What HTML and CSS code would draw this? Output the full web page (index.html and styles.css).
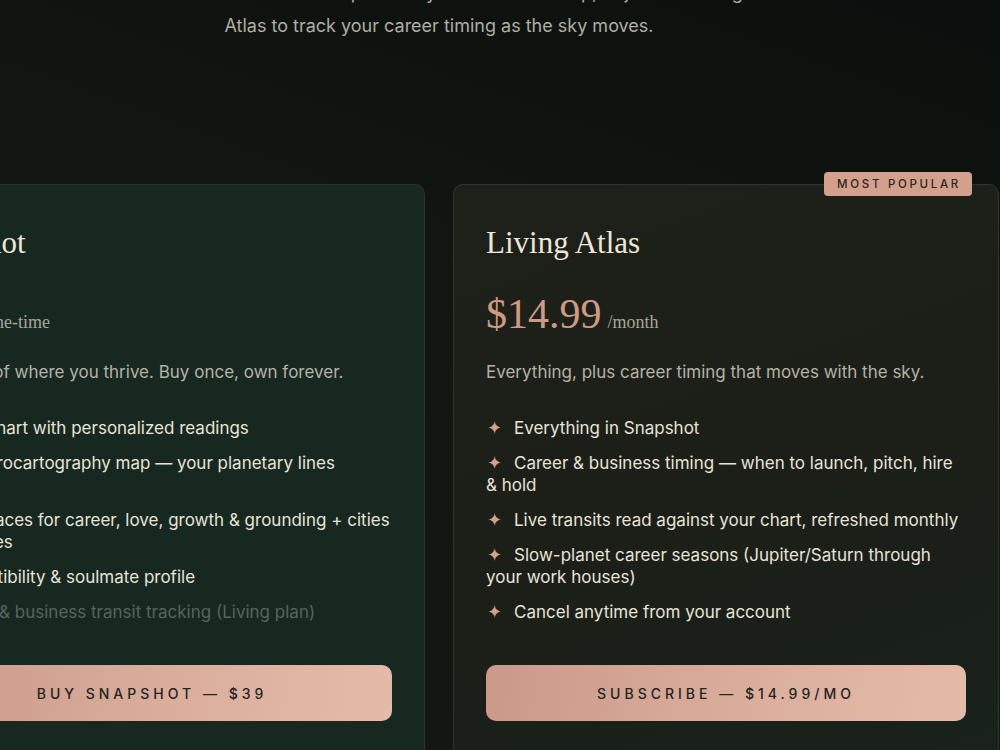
FILE: index.html
```html
<!DOCTYPE html>
<html lang="en">
<head>
    <meta charset="UTF-8">
    <meta name="viewport" content="width=device-width, initial-scale=1.0">
    <title>Pricing</title>
    <link rel="stylesheet" href="styles.css">
</head>
<body>

    <section class="pricing">
        <p class="intro">
            Start with a one-time Snapshot of your chart and map, or join the Living<br>
            Atlas to track your career timing as the sky moves.
        </p>

        <div class="plans">
            <div class="plan plan-snapshot">
                <h2 class="plan-name">Snapshot</h2>
                <div class="plan-price">
                    <span class="amount">$39</span>
                    <span class="period">/one-time</span>
                </div>
                <p class="plan-desc">Your map of where you thrive. Buy once, own forever.</p>
                <ul class="features">
                    <li><span class="star">&#10022;</span>Natal chart with personalized readings</li>
                    <li><span class="star">&#10022;</span>Full astrocartography map &mdash; your planetary lines worldwide</li>
                    <li><span class="star">&#10022;</span>Best places for career, love, growth &amp; grounding + cities in all themes</li>
                    <li><span class="star">&#10022;</span>Compatibility &amp; soulmate profile</li>
                    <li class="off"><span class="star">&#10022;</span>Career &amp; business transit tracking (Living plan)</li>
                </ul>
                <button class="plan-btn">Buy Snapshot &mdash; $39</button>
            </div>

            <div class="plan plan-living">
                <span class="badge">Most Popular</span>
                <h2 class="plan-name">Living Atlas</h2>
                <div class="plan-price">
                    <span class="amount">$14.99</span>
                    <span class="period">/month</span>
                </div>
                <p class="plan-desc">Everything, plus career timing that moves with the sky.</p>
                <ul class="features">
                    <li><span class="star">&#10022;</span>Everything in Snapshot</li>
                    <li><span class="star">&#10022;</span>Career &amp; business timing &mdash; when to launch, pitch, hire &amp; hold</li>
                    <li><span class="star">&#10022;</span>Live transits read against your chart, refreshed monthly</li>
                    <li><span class="star">&#10022;</span>Slow-planet career seasons (Jupiter/Saturn through your work houses)</li>
                    <li><span class="star">&#10022;</span>Cancel anytime from your account</li>
                </ul>
                <button class="plan-btn">Subscribe &mdash; $14.99/mo</button>
            </div>
        </div>
    </section>

</body>
</html>
```

FILE: styles.css
```css
/* pricing section, dark astro theme */

body {
margin: 0;
padding: 0;
font-family: 'Inter', 'Noto Sans', sans-serif;
background: linear-gradient(200deg, #0b100e 0%, #111611 45%, #131812 100%);
color: #e6e1d5;
height: 750px;
overflow: hidden;
}

.pricing {
width: 1120px;
margin-left: -121px;
margin-top: -24px;
}

.intro {
margin: 0 auto;
text-align: center;
font-size: 18px;
line-height: 33px;
color: #b0ada1;
}

.plans {
display: grid;
grid-template-columns: 1fr 1fr;
gap: 28px;
margin-top: 142px;
}

.plan {
position: relative;
display: flex;
flex-direction: column;
padding: 38px 32px 40px;
border-radius: 10px;
border: 1px solid rgba(255, 255, 255, 0.07);
min-height: 620px;
box-sizing: border-box;
}

.plan-snapshot {
background: #172820;
border-color: rgba(140, 170, 150, 0.12);
}

.plan-living {
background: linear-gradient(160deg, #1e2119 0%, #1b1f18 50%, #18221b 100%);
border-color: rgba(255, 255, 255, 0.09);
}

.badge {
position: absolute;
top: -13px;
right: 26px;
background: #d3a08b;
color: #2a2622;
font-size: 11.5px;
font-weight: 500;
letter-spacing: 2.7px;
text-transform: uppercase;
padding: 5px 11px 5px 13px;
border-radius: 4px;
}

.plan-name {
margin: 0;
font-family: 'Liberation Serif', serif;
font-weight: 400;
font-size: 31px;
line-height: 40px;
color: #ede7da;
}

.plan-price {
margin-top: 26px;
display: flex;
align-items: baseline;
gap: 6px;
}

.amount {
font-family: 'Liberation Serif', serif;
font-size: 42px;
line-height: 50px;
color: #cf9a84;
}

.period {
font-family: 'Liberation Serif', serif;
font-size: 18px;
color: #a9a69a;
}

.plan-desc {
margin: 21px 0 0;
font-size: 17px;
line-height: 24px;
color: #b5b2a6;
}

.features {
list-style: none;
margin: 33px 0 0;
padding: 0;
}

.features li {
font-size: 17px;
line-height: 22px;
margin-bottom: 13px;
color: #e8e3d7;
}

.features .star {
color: #d4a08a;
font-size: 18px;
line-height: 1;
margin: 0 12px 0 1px;
}

.features li.off {
color: #56665b;
}

.features li.off .star {
color: #56665b;
}

.plan-btn {
margin-top: 29px;
height: 56px;
border: none;
border-radius: 10px;
background: linear-gradient(100deg, #c9998a 0%, #dbae9c 55%, #e4bba8 100%);
color: #25241f;
font-family: 'Inter', sans-serif;
font-size: 14px;
font-weight: 500;
letter-spacing: 4px;
text-transform: uppercase;
cursor: pointer;
}
```
